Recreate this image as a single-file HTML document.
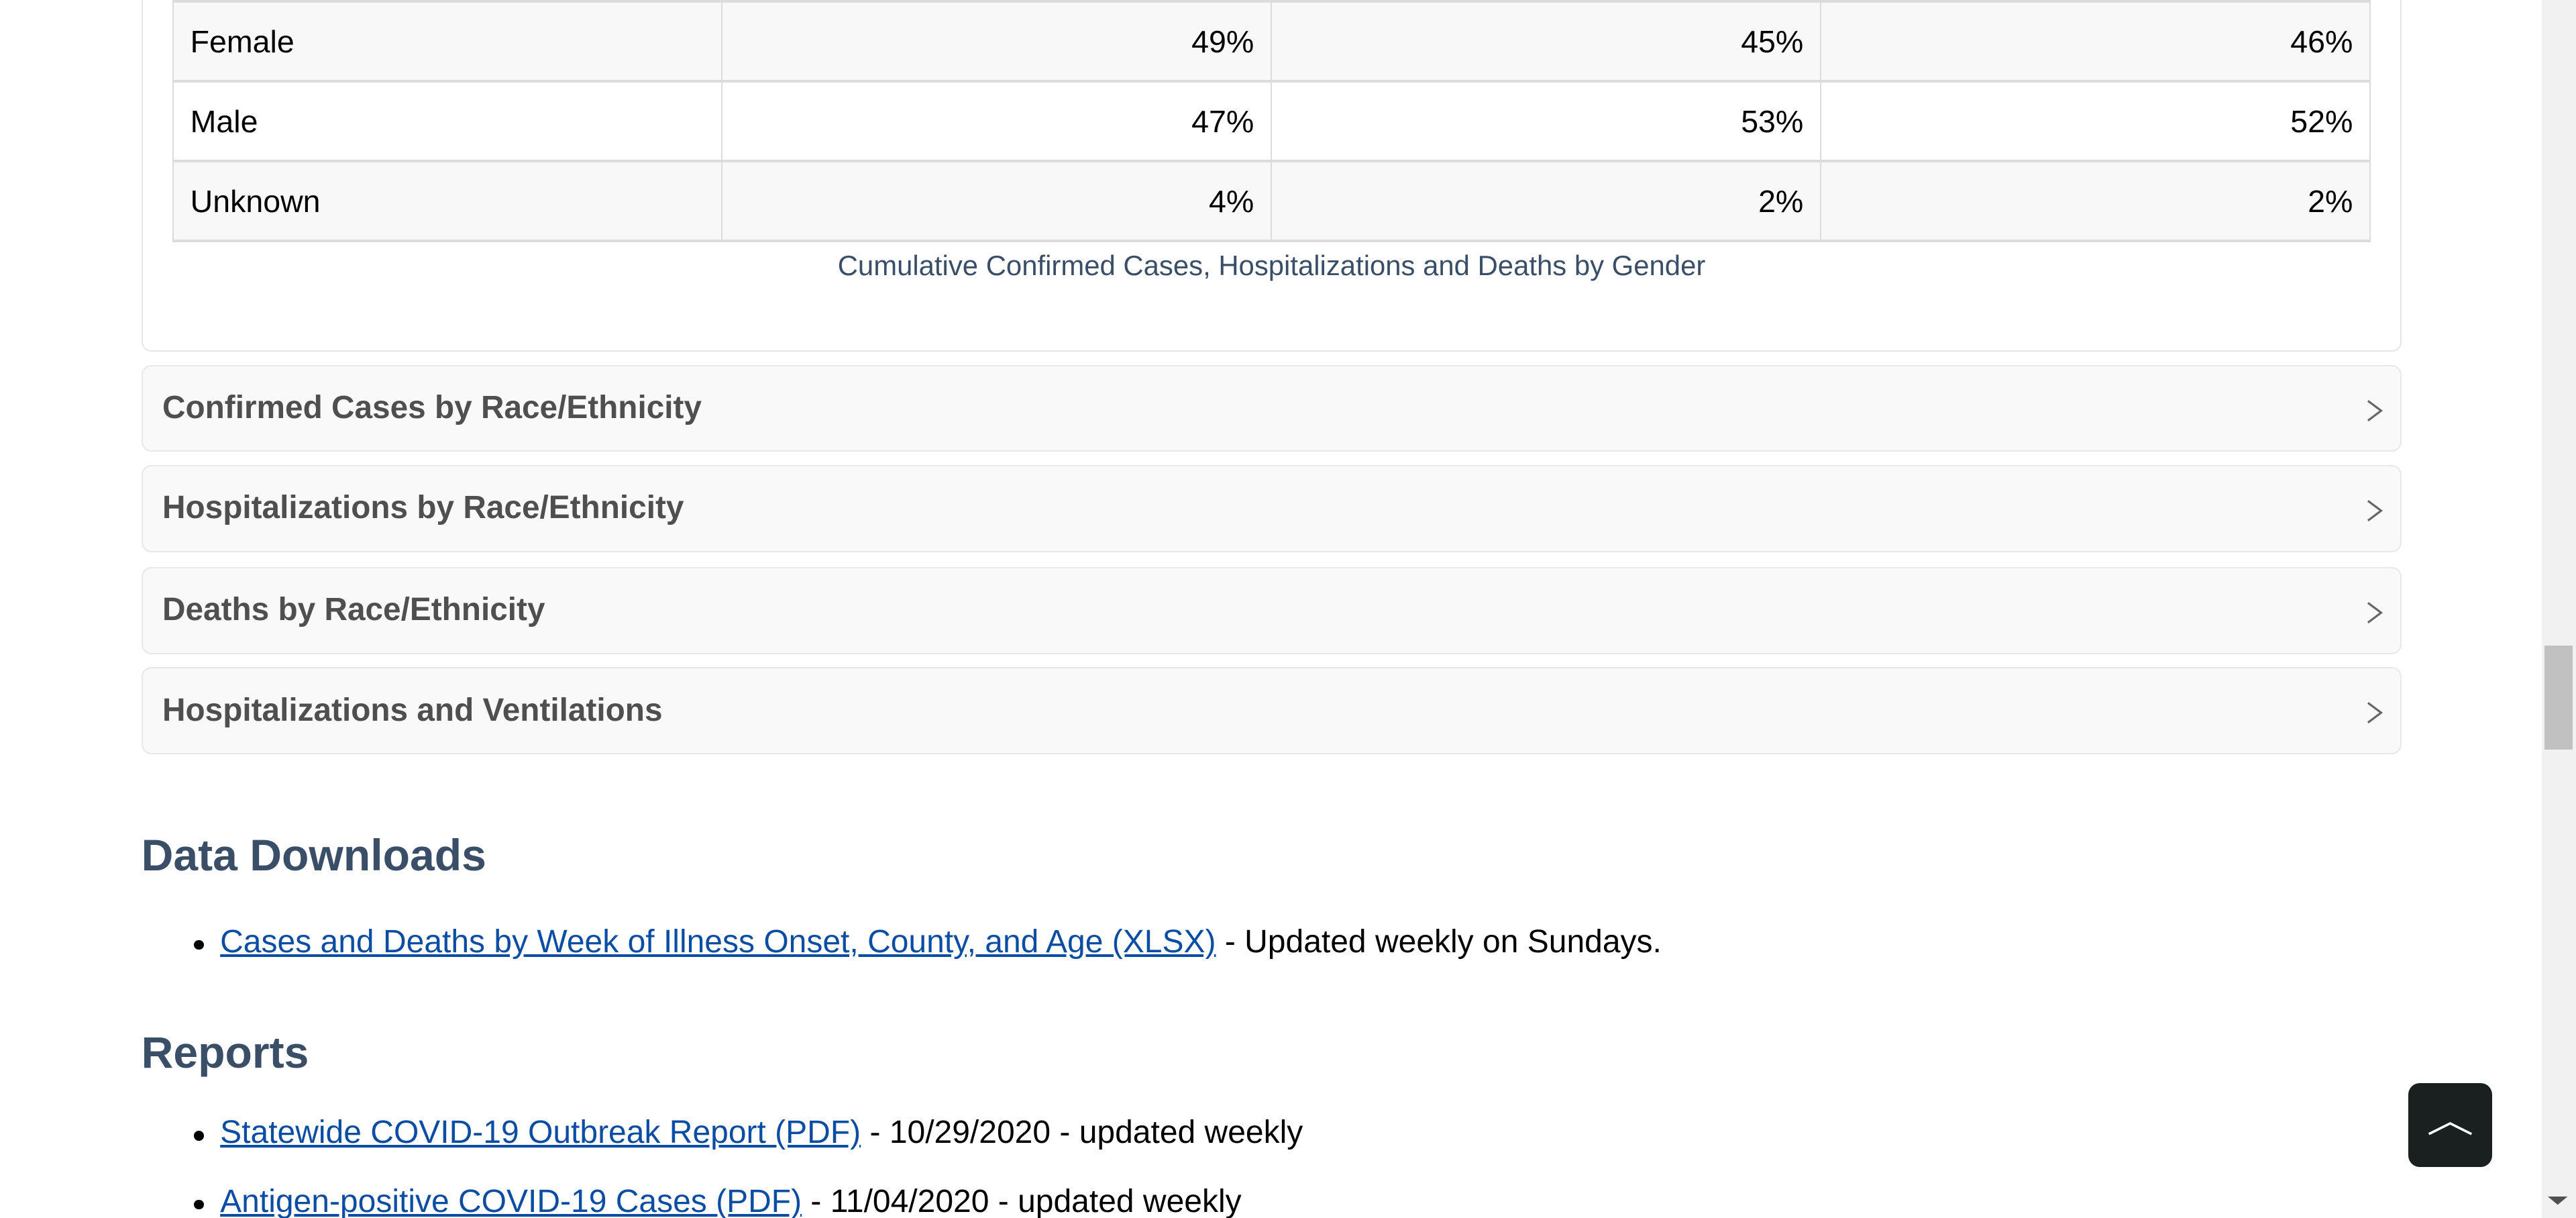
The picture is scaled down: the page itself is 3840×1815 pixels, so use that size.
<!DOCTYPE html>
<html><head><meta charset="utf-8"><style>
html,body{margin:0;padding:0;overflow:hidden;background:#fff}
#w{zoom:2.44898;width:1568px;height:741px;position:relative;overflow:hidden;font-family:"Liberation Sans",Arial,sans-serif;color:#000}
.card{position:absolute;left:86px;top:-10px;width:1376px;height:224px;border:1px solid #e6e6e6;border-radius:6px;box-sizing:border-box}
table{position:absolute;left:105px;top:0;width:1338px;border-collapse:collapse;font-size:19px}
td{border:1px solid #dcdcdc;height:47px;padding:0 10px;text-align:right}
tr{border-top:2px solid #dcdcdc;border-bottom:2px solid #dcdcdc}
td:first-child{text-align:left}
tr.g td{background:#f8f8f8}
.cap{position:absolute;left:105px;width:1338px;top:152px;text-align:center;font-size:17.1px;color:#3a4f67}
.acc{position:absolute;left:86px;width:1376px;height:53px;box-sizing:border-box;border:1px solid #e8e8e8;border-radius:6px;background:#f9f9f9}
.acc span{position:absolute;left:12px;top:14px;font-size:19.5px;font-weight:bold;color:#4f4f4f}
.acc svg{position:absolute;right:10px;top:18px}
h2{position:absolute;left:86px;margin:0;font-size:27px;font-weight:bold;color:#3a4f67}
.li{position:absolute;left:118px;font-size:19.6px;white-space:nowrap}
.li:before{content:"";position:absolute;left:0;top:10px;width:6px;height:6px;border-radius:50%;background:#000}
.li a{margin-left:16px;color:#0b4da2;text-decoration:underline}
.sb{position:absolute;left:1547px;top:0;width:21px;height:741px;background:#f1f1f1}
.th{position:absolute;left:1549px;top:393px;width:17px;height:63px;background:#c1c1c1}
.top{position:absolute;left:1466px;top:659px;width:51px;height:51px;background:#1a1f1f;border-radius:7px}
</style></head><body><div id="w">
<div class="card"></div>
<table>
<tr class="g"><td style="width:313px">Female</td><td>49%</td><td>45%</td><td>46%</td></tr>
<tr><td>Male</td><td>47%</td><td>53%</td><td>52%</td></tr>
<tr class="g"><td>Unknown</td><td>4%</td><td>2%</td><td>2%</td></tr>
</table>
<div class="cap">Cumulative Confirmed Cases, Hospitalizations and Deaths by Gender</div>
<div class="acc" style="top:222px"><span>Confirmed Cases by Race/Ethnicity</span><svg width="12" height="18" viewBox="0 0 12 18"><path d="M2 3 L10 9 L2 15" fill="none" stroke="#666" stroke-width="1.3"/></svg></div>
<div class="acc" style="top:283px"><span>Hospitalizations by Race/Ethnicity</span><svg width="12" height="18" viewBox="0 0 12 18"><path d="M2 3 L10 9 L2 15" fill="none" stroke="#666" stroke-width="1.3"/></svg></div>
<div class="acc" style="top:345px"><span>Deaths by Race/Ethnicity</span><svg width="12" height="18" viewBox="0 0 12 18"><path d="M2 3 L10 9 L2 15" fill="none" stroke="#666" stroke-width="1.3"/></svg></div>
<div class="acc" style="top:406px"><span>Hospitalizations and Ventilations</span><svg width="12" height="18" viewBox="0 0 12 18"><path d="M2 3 L10 9 L2 15" fill="none" stroke="#666" stroke-width="1.3"/></svg></div>
<h2 style="top:505px">Data Downloads</h2>
<div class="li" style="top:562px"><a>Cases and Deaths by Week of Illness Onset, County, and Age (XLSX)</a> - Updated weekly on Sundays.</div>
<h2 style="top:625px">Reports</h2>
<div class="li" style="top:678px"><a>Statewide COVID-19 Outbreak Report (PDF)</a> - 10/29/2020 - updated weekly</div>
<div class="li" style="top:720px"><a>Antigen-positive COVID-19 Cases (PDF)</a> - 11/04/2020 - updated weekly</div>
<div class="sb"></div><div class="th"></div>
<svg style="position:absolute;left:1551px;top:728px" width="12" height="6"><path d="M0 0 L12 0 L6 5Z" fill="#505050"/></svg>
<div class="top"><svg width="51" height="51" viewBox="0 0 51 51"><path d="M12.5 31 L25.5 24.5 L38.5 31" fill="none" stroke="#fff" stroke-width="1.5"/></svg></div>
</div></body></html>
